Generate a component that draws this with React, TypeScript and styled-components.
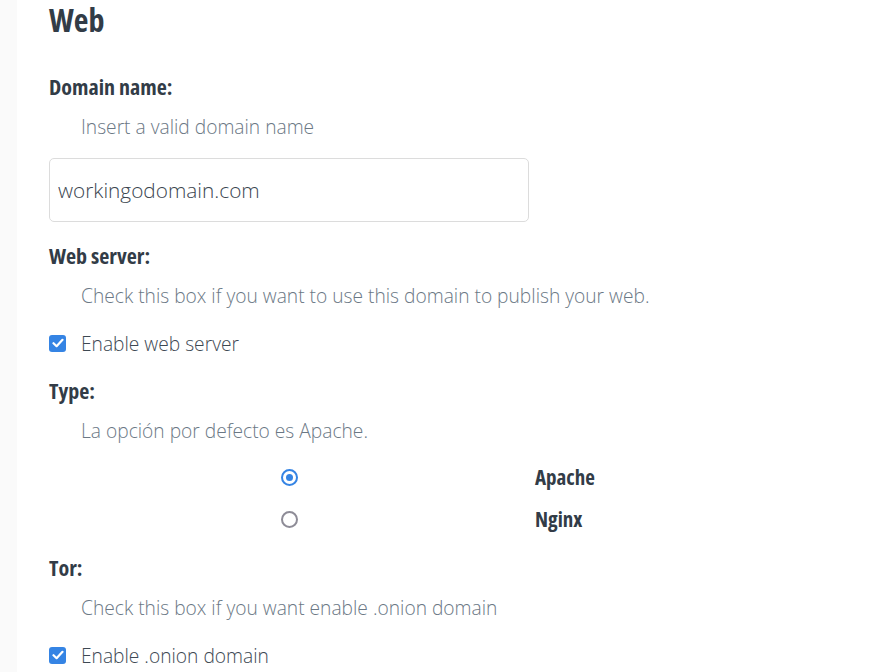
import React, { useState } from 'react';
import styled, { createGlobalStyle } from 'styled-components';

const GlobalStyle = createGlobalStyle`
  html, body {
    margin: 0;
    padding: 0;
    background: #ffffff;
  }
  body {
    font-family: "Open Sans", "Liberation Sans", sans-serif;
    color: #323c47;
  }
`;

const Page = styled.div`
  display: flex;
  min-height: 672px;
`;

const Sidebar = styled.aside`
  width: 17px;
  flex-shrink: 0;
  background: #fafafa;
`;

const Main = styled.main`
  flex: 1;
  padding: 0 0 0 32px;
`;

const Title = styled.h1`
  margin: 0 0 34px;
  font-size: 32px;
  line-height: 40px;
  font-weight: 700;
  font-stretch: 75%;
  color: #323c47;
`;

const Field = styled.section<{ $gap?: number }>`
  margin-bottom: ${p => p.$gap ?? 23}px;
`;

const Label = styled.div`
  font-size: 22px;
  line-height: 24px;
  font-weight: 700;
  font-stretch: 75%;
  color: #323c47;
  margin-bottom: 17px;
`;

const Description = styled.div<{ $gap?: number }>`
  padding-left: 32px;
  font-size: 19.2px;
  line-height: 24px;
  font-weight: 300;
  color: #6b7885;
  margin-bottom: ${p => p.$gap ?? 23}px;
`;

const TextInput = styled.input`
  box-sizing: border-box;
  display: block;
  width: 480px;
  height: 64px;
  padding: 0 8px;
  border: 1px solid #dcdcdc;
  border-radius: 5px;
  font-family: inherit;
  font-size: 20.8px;
  font-weight: 300;
  color: #3b4650;
  outline: none;
`;

const CheckRow = styled.label`
  display: flex;
  align-items: center;
  height: 24px;
  font-size: 19.2px;
  font-weight: 300;
  color: #3d4853;
  cursor: pointer;
`;

const CheckBox = styled.span<{ $on: boolean }>`
  box-sizing: border-box;
  width: 17px;
  height: 17px;
  margin-right: 15px;
  border-radius: 3px;
  display: flex;
  align-items: center;
  justify-content: center;
  background: ${p => (p.$on ? '#3584e4' : '#ffffff')};
  border: ${p => (p.$on ? 'none' : '2px solid #8b8e99')};
`;

const RadioGrid = styled.div`
  display: grid;
  grid-template-columns: 480px auto;
  row-gap: 18px;
`;

const RadioCell = styled.div`
  display: flex;
  align-items: center;
  justify-content: center;
  height: 24px;
  cursor: pointer;
`;

const Radio = styled.span<{ $on: boolean }>`
  box-sizing: border-box;
  width: 17px;
  height: 17px;
  border-radius: 50%;
  border: 2px solid ${p => (p.$on ? '#3584e4' : '#8e8c97')};
  display: flex;
  align-items: center;
  justify-content: center;

  &::after {
    content: '';
    width: 7px;
    height: 7px;
    border-radius: 50%;
    background: ${p => (p.$on ? '#3584e4' : 'transparent')};
  }
`;

const RadioLabel = styled.div`
  padding-left: 6px;
  font-size: 21px;
  line-height: 24px;
  font-weight: 700;
  font-stretch: 75%;
  color: #323c47;
`;

const Tick = () => (
  <svg width="12" height="10" viewBox="0 0 12 10">
    <path d="M1.5 5.2 L4.6 8.2 L10.5 1.8" fill="none" stroke="#fff" strokeWidth="2.2" strokeLinecap="round" strokeLinejoin="round" />
  </svg>
);

const Checkbox: React.FC<{ checked: boolean; onToggle: () => void; children: React.ReactNode }> = ({ checked, onToggle, children }) => (
  <CheckRow onClick={onToggle}>
    <CheckBox $on={checked}>{checked && <Tick />}</CheckBox>
    {children}
  </CheckRow>
);

export default function App() {
  const [domain, setDomain] = useState('workingodomain.com');
  const [web, setWeb] = useState(true);
  const [server, setServer] = useState<'apache' | 'nginx'>('apache');
  const [tor, setTor] = useState(true);

  return (
    <Page>
      <GlobalStyle />
      <Sidebar />
      <Main>
        <Title>Web</Title>

        <Field $gap={21}>
          <Label>Domain name:</Label>
          <Description $gap={19}>Insert a valid domain name</Description>
          <TextInput value={domain} onChange={e => setDomain(e.target.value)} />
        </Field>

        <Field>
          <Label>Web server:</Label>
          <Description>Check this box if you want to use this domain to publish your web.</Description>
          <Checkbox checked={web} onToggle={() => setWeb(!web)}>Enable web server</Checkbox>
        </Field>

        <Field $gap={24}>
          <Label>Type:</Label>
          <Description $gap={22}>La opción por defecto es Apache.</Description>
          <RadioGrid>
            <RadioCell onClick={() => setServer('apache')}>
              <Radio $on={server === 'apache'} />
            </RadioCell>
            <RadioLabel>Apache</RadioLabel>
            <RadioCell onClick={() => setServer('nginx')}>
              <Radio $on={server === 'nginx'} />
            </RadioCell>
            <RadioLabel>Nginx</RadioLabel>
          </RadioGrid>
        </Field>

        <Field>
          <Label>Tor:</Label>
          <Description>Check this box if you want enable .onion domain</Description>
          <Checkbox checked={tor} onToggle={() => setTor(!tor)}>Enable .onion domain</Checkbox>
        </Field>
      </Main>
    </Page>
  );
}
